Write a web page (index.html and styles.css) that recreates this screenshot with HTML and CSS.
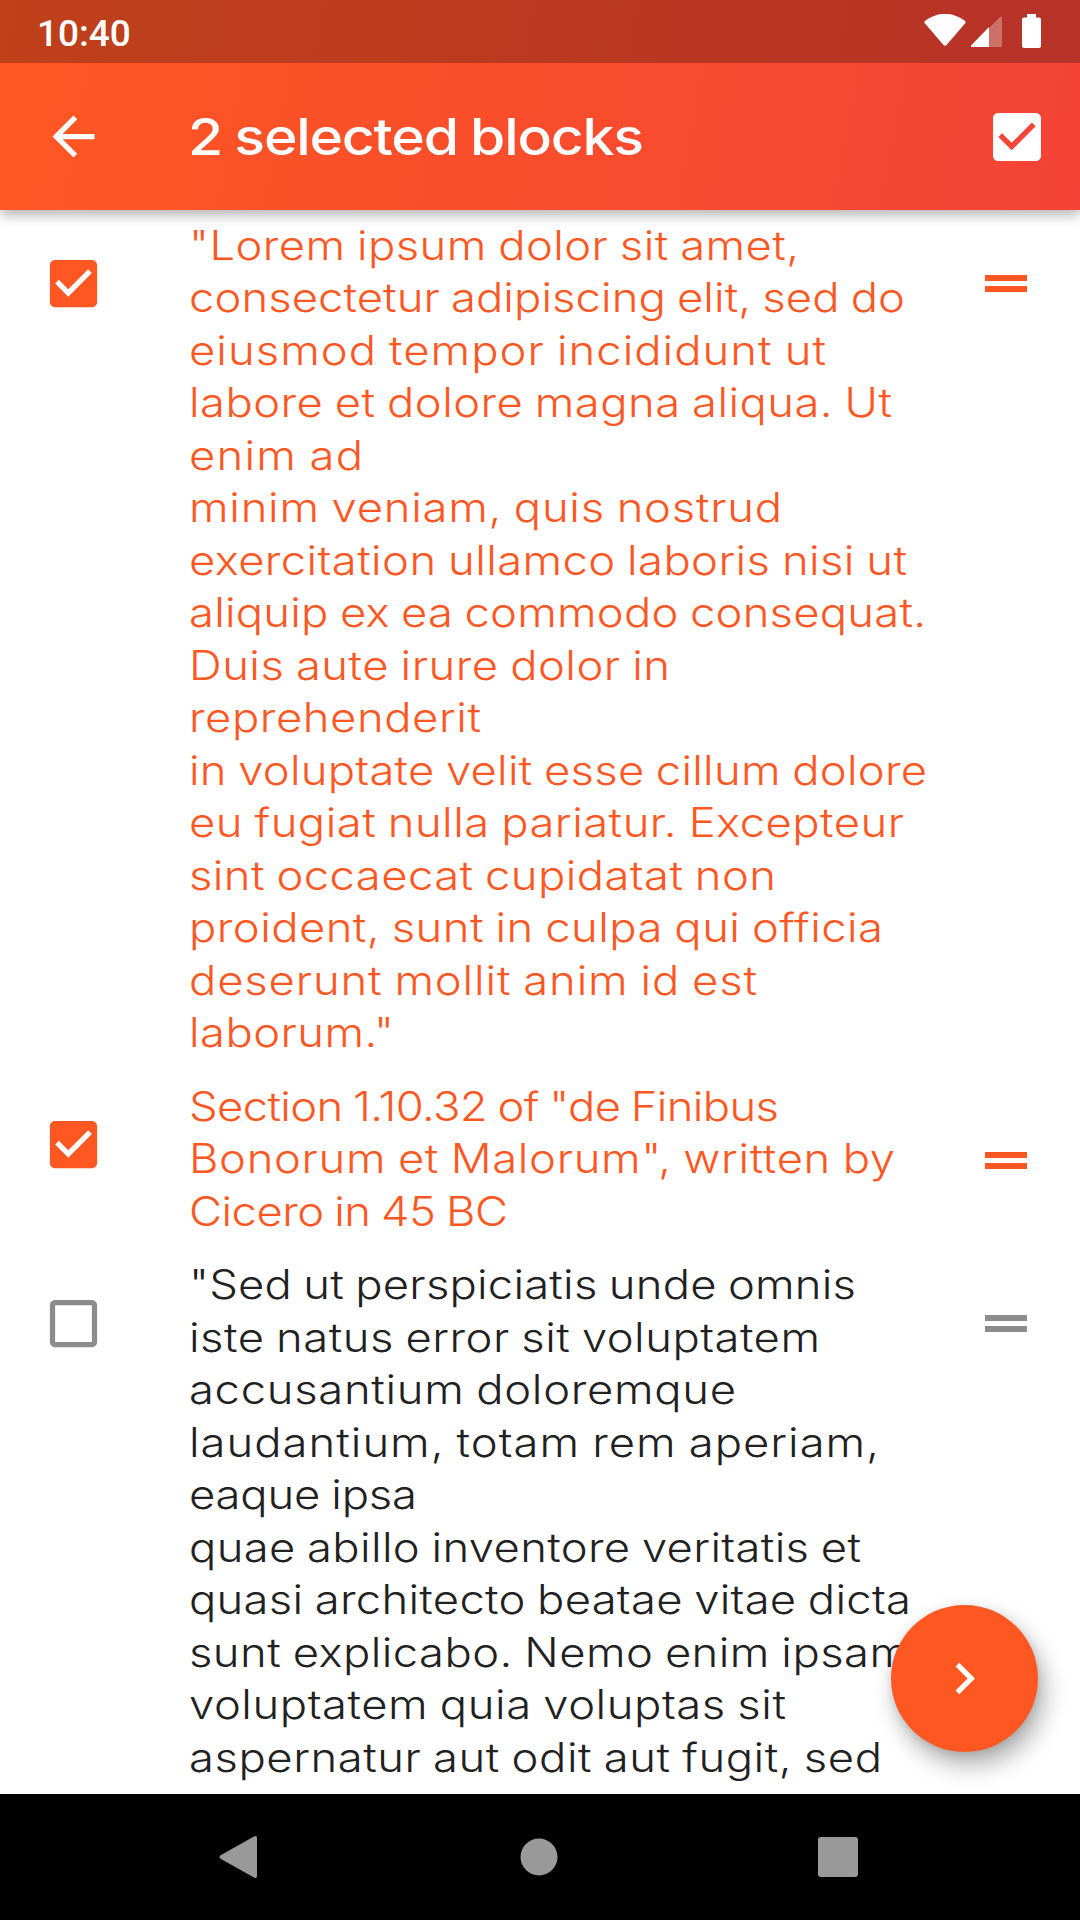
FILE: index.html
```html
<!DOCTYPE html>
<html lang="en">
<head>
<meta charset="utf-8">
<title>Selected blocks</title>
<link rel="stylesheet" href="styles.css">
</head>
<body>
<div class="screen">
  <header class="header">
    <div class="status">
      <span class="clock">10:40</span>
      <svg class="status-icons" width="118" height="36" viewBox="0 0 118 36" fill="#fff">
        <path d="M1.5 6.5Q21-7 40.5 6.5Q42.5 8 41 9.5L22.5 31Q21 32.5 19.500 31L1 9.500Q-.5 8 1.500 6.500Z"/>
        <path opacity=".3" d="M65 14L75 4Q78 1 78 4V31.500Q78 33 76.500 33H65Z"/>
        <path d="M65 13V33H48Q46 33 47.500 31Z"/>
        <path d="M103 0h9v3.500h3q2 0 2 2V32q0 2-2 2H100q-2 0-2-2V5.500q0-2 2-2h3Z"/>
      </svg>
    </div>
    <div class="toolbar">
      <svg class="back" width="63" height="63" viewBox="0 0 24 24" fill="#fff"><path d="M20 11H7.830l5.590-5.590L12 4l-8 8 8 8 1.410-1.410L7.830 13H20v-2z"/></svg>
      <h1 class="title"><span class="fit" data-width="456">2 selected blocks</span></h1>
      <svg class="all" width="64" height="64" viewBox="0 0 24 24" fill="#fff"><path d="M19 3H5c-1.110 0-2 .9-2 2v14c0 1.100.89 2 2 2h14c1.110 0 2-.9 2-2V5c0-1.100-.89-2-2-2zm-9 14l-5-5 1.410-1.410L10 14.170l7.590-7.590L19 8l-9 9z"/></svg>
    </div>
  </header>
  <main class="list">
    <section class="row selected">
      <svg class="check" width="63" height="63" viewBox="0 0 24 24"><path d="M19 3H5c-1.110 0-2 .9-2 2v14c0 1.100.89 2 2 2h14c1.110 0 2-.9 2-2V5c0-1.100-.89-2-2-2zm-9 14l-5-5 1.410-1.410L10 14.170l7.590-7.590L19 8l-9 9z"/></svg>
      <div class="text">
        <span class="fit" data-width="610">"Lorem ipsum dolor sit amet,</span>
        <span class="fit" data-width="716">consectetur adipiscing elit, sed do</span>
        <span class="fit" data-width="637">eiusmod tempor incididunt ut</span>
        <span class="fit" data-width="703">labore et dolore magna aliqua. Ut</span>
        <span class="fit" data-width="174">enim ad</span>
        <span class="fit" data-width="593">minim veniam, quis nostrud</span>
        <span class="fit" data-width="718">exercitation ullamco laboris nisi ut</span>
        <span class="fit" data-width="737">aliquip ex ea commodo consequat.</span>
        <span class="fit" data-width="481">Duis aute irure dolor in</span>
        <span class="fit" data-width="292">reprehenderit</span>
        <span class="fit" data-width="738">in voluptate velit esse cillum dolore</span>
        <span class="fit" data-width="715">eu fugiat nulla pariatur. Excepteur</span>
        <span class="fit" data-width="587">sint occaecat cupidatat non</span>
        <span class="fit" data-width="694">proident, sunt in culpa qui officia</span>
        <span class="fit" data-width="568">deserunt mollit anim id est</span>
        <span class="fit" data-width="205">laborum."</span>
      </div>
      <i class="handle"></i>
    </section>
    <section class="row selected">
      <svg class="check" width="63" height="63" viewBox="0 0 24 24"><path d="M19 3H5c-1.110 0-2 .9-2 2v14c0 1.100.89 2 2 2h14c1.110 0 2-.9 2-2V5c0-1.100-.89-2-2-2zm-9 14l-5-5 1.410-1.410L10 14.170l7.590-7.590L19 8l-9 9z"/></svg>
      <div class="text">
        <span class="fit" data-width="590">Section 1.10.32 of "de Finibus</span>
        <span class="fit" data-width="706">Bonorum et Malorum", written by</span>
        <span class="fit" data-width="319">Cicero in 45 BC</span>
      </div>
      <i class="handle centered"></i>
    </section>
    <section class="row">
      <svg class="check" width="63" height="63" viewBox="0 0 24 24"><path d="M19 5v14H5V5h14m0-2H5c-1.100 0-2 .9-2 2v14c0 1.100.9 2 2 2h14c1.100 0 2-.9 2-2V5c0-1.100-.9-2-2-2z"/></svg>
      <div class="text">
        <span class="fit" data-width="667">"Sed ut perspiciatis unde omnis</span>
        <span class="fit" data-width="631">iste natus error sit voluptatem</span>
        <span class="fit" data-width="547">accusantium doloremque</span>
        <span class="fit" data-width="690">laudantium, totam rem aperiam,</span>
        <span class="fit" data-width="228">eaque ipsa</span>
        <span class="fit" data-width="672">quae abillo inventore veritatis et</span>
        <span class="fit" data-width="722">quasi architecto beatae vitae dicta</span>
        <span class="fit" data-width="720">sunt explicabo. Nemo enim ipsam</span>
        <span class="fit" data-width="597">voluptatem quia voluptas sit</span>
        <span class="fit" data-width="693">aspernatur aut odit aut fugit, sed</span>
        <span class="fit" data-width="712">quia consequuntur magni dolores</span>
      </div>
      <i class="handle"></i>
    </section>
    <button class="fab" aria-label="Next"><svg width="63" height="63" viewBox="0 0 24 24" fill="#fff"><path d="M10 6L8.590 7.410 13.170 12l-4.580 4.590L10 18l6-6z"/></svg></button>
  </main>
  <nav class="nav">
    <svg width="40" height="44" viewBox="0 0 40 44"><path d="M35 1.500Q38 0 38 3V41Q38 44 35 42.500L2 24Q-1 22 2 20Z"/></svg>
    <svg width="38" height="38" viewBox="0 0 38 38"><circle cx="19" cy="19" r="18.500"/></svg>
    <svg width="40" height="40" viewBox="0 0 40 40"><rect width="40" height="40" rx="3"/></svg>
  </nav>
</div>
<script src="fit.js"></script>
</body>
</html>
```
FILE: styles.css
```css
* { box-sizing: border-box; }
body { margin: 0; background: #fff; font-family: Inter, "Liberation Sans", sans-serif; }
.screen { width: 1080px; height: 1920px; display: flex; flex-direction: column; overflow: hidden; }
.header {
  height: 210px; flex: none; z-index: 1;
  background: linear-gradient(101deg, #ff5722, #f44336);
  box-shadow: 0 5px 12px rgba(0,0,0,.3);
}
.status {
  height: 63px; padding: 0 38px 0 37px; background: rgba(0,0,0,.25);
  display: flex; justify-content: space-between; align-items: center;
}
.clock { font: 500 37px/63px Roboto, sans-serif; color: #fff; padding-top: 3px; }
.status-icons { margin-top: 1px; }
.toolbar { height: 147px; padding: 0 31px 0 42px; display: grid; grid-template-columns: 147px 1fr 64px; align-items: center; }
.title { margin: 0 0 0 -1px; font-size: 51px; font-weight: 500; line-height: 60px; color: #fff; }
.fit {
  display: block; width: max-content; white-space: pre; word-spacing: -1.500px;
  transform-origin: 0 50%; transform: scaleX(1.12);
}
.list { flex: 1; min-height: 0; overflow: hidden; position: relative; padding-top: 9px; }
.row { display: grid; grid-template-columns: 147px 1fr 43px; padding: 0 52px 21px 42px; color: #212121; }
.selected { color: #ff5722; }
.check { margin-top: 33px; fill: #8c8c8c; }
.selected .check { fill: #ff5722; }
.text { font-size: 40.5px; font-weight: 320; line-height: 52.5px; padding-top: .5px; margin-bottom: -.5px; }
.handle { width: 42px; height: 17px; margin-top: 56px; border: solid #8c8c8c; border-width: 6px 0; }
.selected .handle { border-color: #ff5722; }
.handle.centered { align-self: center; margin-top: 3px; }
.fab {
  position: absolute; right: 42px; bottom: 42px; width: 147px; height: 147px; border: 0; border-radius: 50%;
  background: #ff5722; display: flex; align-items: center; justify-content: center; padding: 0;
  box-shadow: 6px 13px 24px rgba(0,0,0,.32), 0 2px 8px rgba(0,0,0,.1);
}
.nav { height: 126px; flex: none; background: #000; display: flex; align-items: center; justify-content: space-between; padding: 0 222px 0 219px; fill: #999; }
```
FILE: fit.js
```js
// Spread each line's letters so that it fills its measure.
const STRETCH = 1.12;
document.querySelectorAll('.fit').forEach((line) => {
  const spare = (line.dataset.width - line.getBoundingClientRect().width) / STRETCH;
  line.style.letterSpacing = spare / (line.textContent.length - 1) + 'px';
});
```
